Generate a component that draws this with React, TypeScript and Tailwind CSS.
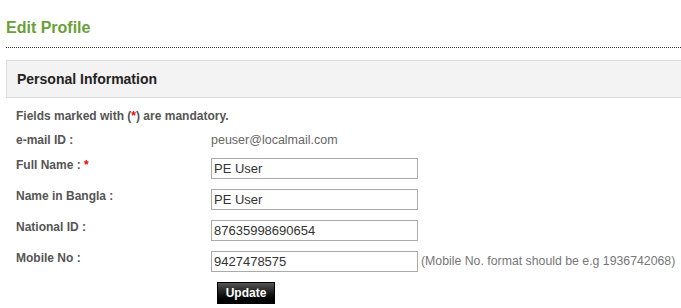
import React from "react";

const font = { fontFamily: '"Liberation Sans", Arial, sans-serif' };

function Row({ label, required, value, hint }: { label: string; required?: boolean; value: string; hint?: string }) {
  return (
    <div className="flex items-start h-[31px]">
      <div className="w-[195px] text-[12px] leading-[16px] font-bold text-[#555]">
        {label}
        {required && <span className="text-[#e00]"> *</span>}
      </div>
      <div className="flex items-center mt-[1px]">
        <input
          readOnly
          value={value}
          className="w-[207px] h-[21px] border border-[#aaa] bg-white pl-[2px] text-[13px] text-[#333] outline-none"
          style={font}
        />
        {hint && <span className="ml-[3px] text-[12.3px] text-[#777]">{hint}</span>}
      </div>
    </div>
  );
}

export default function App() {
  return (
    <div className="w-[681px] h-[308px] overflow-hidden bg-white" style={font}>
      <div className="pl-[6px]">
        <div className="pt-[18px] h-[38px] text-[16px] leading-[20px] font-bold text-[#6a9f3a]">Edit Profile</div>
        <div className="mt-[9px] border-b border-dotted border-[#333]" />
        <div className="mt-[12px] h-[38px] border border-r-0 border-[#dcdcdc] bg-[#f3f3f3] flex items-center pl-[10px]">
          <span className="text-[14px] font-bold text-[#222]">Personal Information</span>
        </div>
        <div className="pl-[10px]">
          <div className="mt-[10px] h-[24px] text-[12px] leading-[16px] font-bold text-[#555]">
            Fields marked with (<span className="text-[#e00]">*</span>) are mandatory.
          </div>
          <div className="flex items-start h-[25px]">
            <div className="w-[195px] text-[12px] leading-[16px] font-bold text-[#555]">e-mail ID :</div>
            <div className="text-[12.5px] leading-[16px] text-[#666]">peuser@localmail.com</div>
          </div>
          <Row label="Full Name :" required value="PE User" />
          <Row label="Name in Bangla :" value="PE User" />
          <Row label="National ID :" value="87635998690654" />
          <Row label="Mobile No :" value="9427478575" hint="(Mobile No. format should be e.g 1936742068)" />
          <div className="flex pl-[201px] mt-[1px]">
            <button className="flex items-center justify-center h-[22px] w-[58px] border border-black bg-gradient-to-b from-[#555] to-[#000] text-white text-[12px] font-bold" style={font}>
              Update
            </button>
          </div>
        </div>
      </div>
    </div>
  );
}
